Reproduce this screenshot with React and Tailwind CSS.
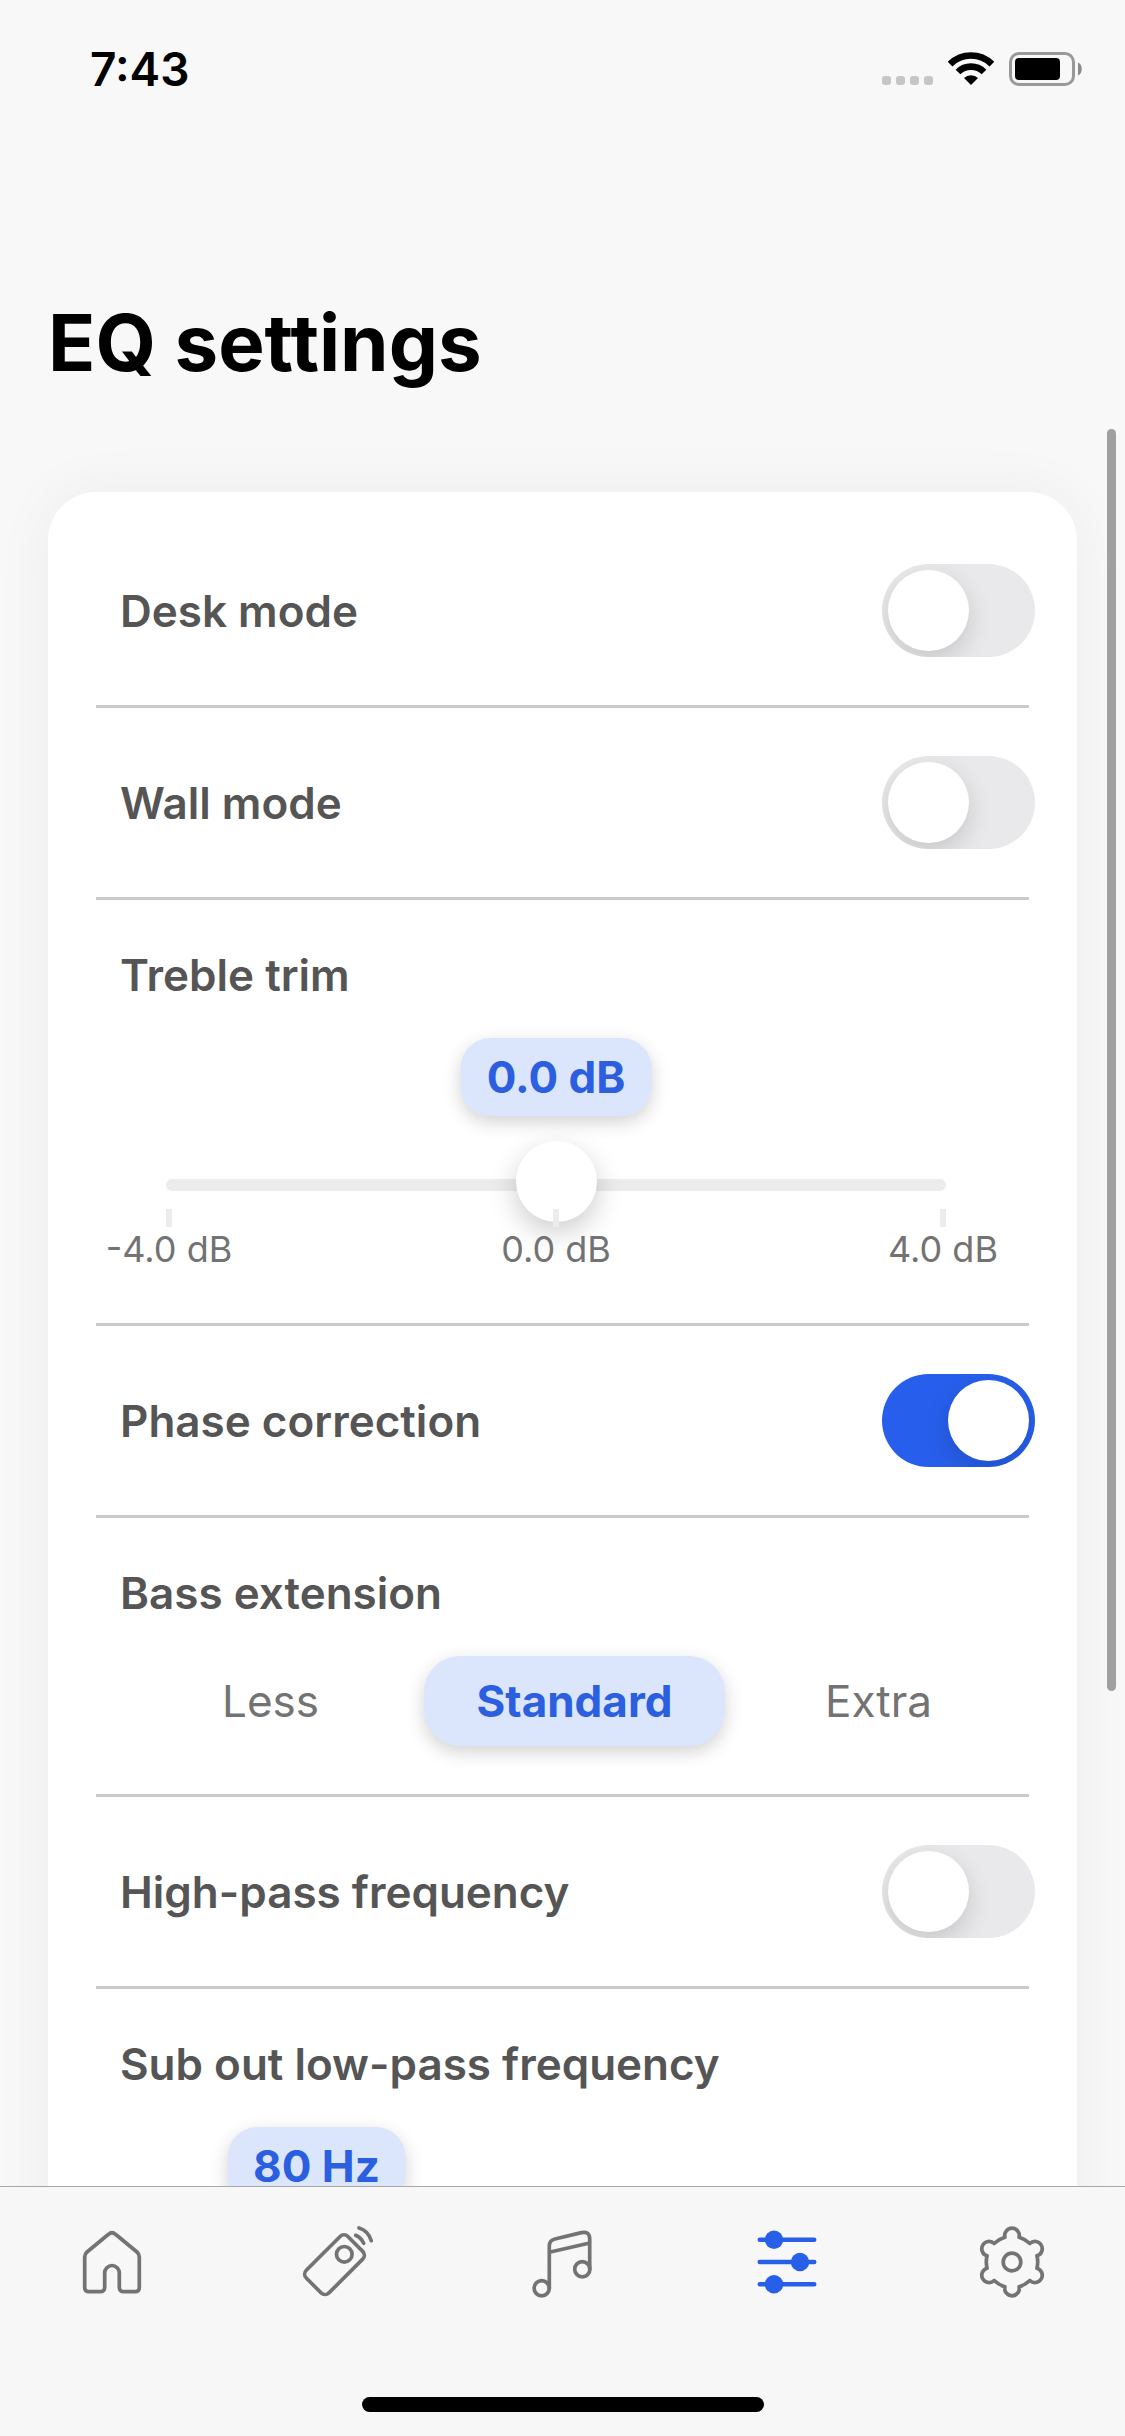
import { useState } from "react";

const DIVIDER = "mr-1.5 h-[3px] bg-[#cacaca]";
const LABEL = "pl-6 text-[44px] leading-[54px] font-semibold text-[#555555]";

function StatusBar() {
  return (
    <div className="flex h-[138px] items-center justify-between pr-[43px] pl-[90px]">
      <time className="text-[46px] leading-[54px] font-semibold text-black">7:43</time>
      <div className="flex items-center gap-[15px]">
        <div className="flex gap-[5px] self-end pb-px">
          {[0, 1, 2, 3].map((i) => (
            <span key={i} className="size-[9px] rounded-[3px] bg-[#c6c6c6]" />
          ))}
        </div>
        <svg width="46" height="34" viewBox="0 0 46 34" fill="none" aria-hidden="true">
          <path d="M2.1 12.1a29.6 29.6 0 0 1 41.8 0" stroke="#000" strokeWidth="6.6" />
          <path d="M10 20a18.4 18.4 0 0 1 26 0" stroke="#000" strokeWidth="6.6" />
          <path d="M23 33l-7-7a10 10 0 0 1 14 0z" fill="#000" />
        </svg>
        <svg width="73" height="34" viewBox="0 0 73 34" fill="none" aria-hidden="true">
          <rect x="1.5" y="1.5" width="63" height="31" rx="8.5" stroke="#999" strokeWidth="3" />
          <rect x="6" y="6" width="45" height="22" rx="4" fill="#000" />
          <path d="M69 10.5c5 2 5 11 0 13z" fill="#8a8a8a" />
        </svg>
      </div>
    </div>
  );
}

function SwitchRow({ id, label, defaultChecked = false }) {
  return (
    <div className="flex items-center justify-between py-12">
      <label htmlFor={id} className={LABEL}>
        {label}
      </label>
      <input
        id={id}
        type="checkbox"
        role="switch"
        defaultChecked={defaultChecked}
        className="relative h-[93px] w-[153px] shrink-0 appearance-none overflow-hidden rounded-full bg-[#e9e9eb] p-1.5 before:block before:size-[81px] before:rounded-full before:bg-white before:shadow-[0_9px_24px_rgba(0,0,0,0.15)] before:content-[''] checked:bg-[#275fec] checked:before:translate-x-[60px]"
      />
    </div>
  );
}

function SliderRow({ id, label, min, max, step, initial, format, ticks = [] }) {
  const [value, setValue] = useState(initial);
  const ratio = (value - min) / (max - min);
  return (
    <div className="pt-12 pb-[52px]">
      <label htmlFor={id} className={LABEL + " block"}>
        {label}
      </label>
      <div className="mt-9 pr-[89px] pl-[70px]">
        <div className="relative h-[78px]">
          <output
            htmlFor={id}
            className="absolute top-0 flex h-[78px] -translate-x-1/2 items-center rounded-[30px] bg-[#dbe6fd] px-[26px] text-[44px] leading-[54px] font-bold whitespace-nowrap text-[#2b5fe0] shadow-[0_6px_18px_rgba(0,0,0,0.18)]"
            style={{ left: `calc(${ratio * 100}% + ${40 - ratio * 80}px)` }}
          >
            {format(value)}
          </output>
        </div>
        <input
          id={id}
          type="range"
          min={min}
          max={max}
          step={step}
          value={value}
          onChange={(e) => setValue(Number(e.target.value))}
          className="mt-[63px] block h-3 w-full appearance-none rounded-full bg-[#ececec] [&::-webkit-slider-runnable-track]:h-3 [&::-webkit-slider-thumb]:-mt-[38px] [&::-webkit-slider-thumb]:size-[81px] [&::-webkit-slider-thumb]:appearance-none [&::-webkit-slider-thumb]:rounded-full [&::-webkit-slider-thumb]:bg-white [&::-webkit-slider-thumb]:shadow-[0_10px_28px_rgba(0,0,0,0.2)]"
        />
        <div className="relative mt-[18px] flex justify-between">
          {ticks.map((t) => (
            <div key={t} className="flex w-1.5 flex-col items-center">
              <span className="h-[18px] w-1.5 bg-[#ececec]" />
              <span className="text-[36px] leading-[44px] whitespace-nowrap text-[#737373]">{format(t)}</span>
            </div>
          ))}
        </div>
      </div>
    </div>
  );
}

function SegmentedRow({ name, label, options, initial }) {
  return (
    <fieldset className="pt-12 pr-1.5 pb-12">
      <legend className={LABEL + " float-left w-full"}>{label}</legend>
      <div className="clear-both grid grid-cols-3 gap-[3px] pt-9 pl-6">
        {options.map((option) => (
          <label
            key={option}
            className="flex h-[90px] items-center justify-center rounded-[36px] text-[44px] leading-[54px] text-[#737373] has-checked:bg-[#dbe6fd] has-checked:font-bold has-checked:text-[#2b5fe0] has-checked:shadow-[0_6px_18px_rgba(0,0,0,0.18)]"
          >
            <input type="radio" name={name} defaultChecked={option === initial} className="sr-only" />
            {option}
          </label>
        ))}
      </div>
    </fieldset>
  );
}

function Icon({ children }) {
  return (
    <svg
      width="75"
      height="75"
      viewBox="0 0 75 75"
      fill="none"
      stroke="currentColor"
      strokeWidth="3.7"
      strokeLinecap="round"
      strokeLinejoin="round"
      aria-hidden="true"
    >
      {children}
    </svg>
  );
}

/* Six-lobed gear outline centred on (37, 37). */
function gearPath() {
  const at = (deg) => {
    const a = (deg * Math.PI) / 180;
    return `${(37 + 25.7 * Math.sin(a)).toFixed(2)} ${(37 - 25.7 * Math.cos(a)).toFixed(2)}`;
  };
  let d = `M${at(-16)}`;
  for (let k = 0; k < 6; k++) {
    d += `A7.3 7.3 0 1 1 ${at(k * 60 + 16)}A26 26 0 0 1 ${at(k * 60 + 44)}`;
  }
  return d + "Z";
}

const TABS = [
  {
    name: "Home",
    icon: (
      <path d="M33.5 9.3 12 27Q9.7 29 9.7 32V62.2Q9.7 66.7 14.2 66.7H25Q29.7 66.7 29.7 62V48A7.3 7.5 0 0 1 44.3 48V62Q44.3 66.7 49 66.7H60Q64.3 66.7 64.3 62.2V32Q64.3 29 62 27L40.5 9.3Q37 6.2 33.5 9.3Z" />
    ),
  },
  {
    name: "Remote",
    icon: (
      <>
        <rect x="-29.4" y="-16" width="58.8" height="32" rx="5.5" transform="translate(34.5 39.7) rotate(-45)" />
        <circle cx="44.3" cy="29.3" r="7.8" />
        <path d="M55.7 10.3Q61 12.5 63.7 18.3M59 3Q68 5.5 71.3 15.7" />
      </>
    ),
  },
  {
    name: "Music",
    icon: (
      <>
        <path d="M24.3 63.3V21Q24.3 15.3 30 14L56.5 7.6Q64.7 6 64.7 14V44.3M24.3 27.3 64.7 18" />
        <circle cx="16.7" cy="63.3" r="7.6" />
        <circle cx="57.3" cy="44.3" r="7.6" />
      </>
    ),
  },
  {
    name: "EQ settings",
    active: true,
    icon: (
      <>
        <path d="M9.8 14.7H64.2M9.8 37H64.2M9.8 59.3H64.2" strokeWidth="4.6" />
        <g fill="currentColor" stroke="none">
          <circle cx="24" cy="14.7" r="9.2" />
          <circle cx="50" cy="37" r="9.2" />
          <circle cx="24" cy="59.3" r="9.2" />
        </g>
      </>
    ),
  },
  {
    name: "Settings",
    icon: (
      <>
        <path d={gearPath()} />
        <circle cx="37" cy="37" r="8.8" />
      </>
    ),
  },
];

const dB = (v) => `${v.toFixed(1)} dB`;
const hz = (v) => `${v} Hz`;

export default function App() {
  return (
    <div className="flex h-screen flex-col overflow-hidden bg-[#f8f8f8] font-['Inter',sans-serif]">
      <header className="shrink-0">
        <StatusBar />
        <h1 className="px-12 pt-[157px] pb-8 text-[78px] leading-[96px] font-bold text-black">EQ settings</h1>
      </header>

      <div className="relative min-h-0 flex-1">
        <main className="h-full overflow-y-auto px-12 pt-[69px] [scrollbar-width:none]">
          <section className="rounded-[48px] bg-white pt-6 pr-[42px] pb-6 pl-12 shadow-[0_0_60px_rgba(0,0,0,0.05)]">
            <SwitchRow id="desk" label="Desk mode" />
            <div className={DIVIDER} />
            <SwitchRow id="wall" label="Wall mode" />
            <div className={DIVIDER} />
            <SliderRow id="treble" label="Treble trim" min={-4} max={4} step={0.5} initial={0} format={dB} ticks={[-4, 0, 4]} />
            <div className={DIVIDER} />
            <SwitchRow id="phase" label="Phase correction" defaultChecked />
            <div className={DIVIDER} />
            <SegmentedRow name="bass" label="Bass extension" options={["Less", "Standard", "Extra"]} initial="Standard" />
            <div className={DIVIDER} />
            <SwitchRow id="highpass" label="High-pass frequency" />
            <div className={DIVIDER} />
            <SliderRow id="sub" label="Sub out low-pass frequency" min={50} max={240} step={5} initial={80} format={hz} />
          </section>
        </main>
        <div className="absolute top-1.5 right-[9px] h-[1262px] w-[9px] rounded-full bg-[#a0a0a0]" />
      </div>

      <footer className="shrink-0 border-t border-[#a8a8a8] bg-[#f7f7f8]">
        <nav className="grid grid-cols-5">
          {TABS.map((tab) => (
            <button
              key={tab.name}
              type="button"
              aria-label={tab.name}
              aria-current={tab.active ? "page" : undefined}
              className="flex h-[150px] items-center justify-center text-[#737373] aria-[current=page]:text-[#275fe8]"
            >
              <Icon>{tab.icon}</Icon>
            </button>
          ))}
        </nav>
        <div className="flex justify-center pt-[60px] pb-6">
          <div className="h-[15px] w-[402px] rounded-full bg-black" />
        </div>
      </footer>
    </div>
  );
}
